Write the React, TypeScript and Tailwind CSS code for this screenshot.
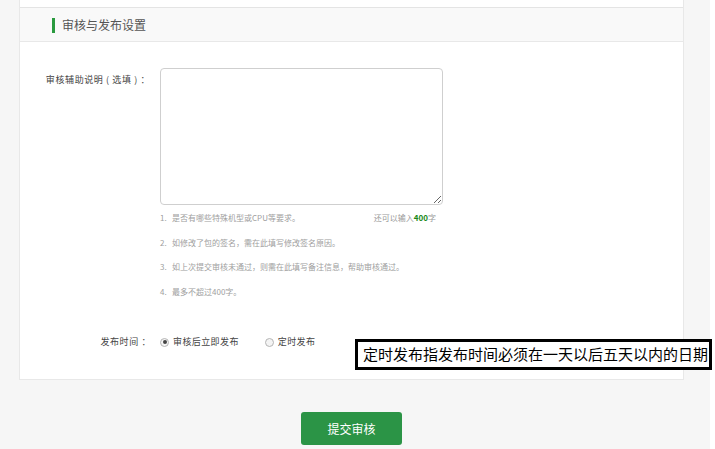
import React from "react";

const cjk = { fontFamily: '"Noto Sans CJK SC", "Noto Sans", sans-serif' };

function Radio({ checked }: { checked?: boolean }) {
  return (
    <span className="w-[9px] h-[9px] rounded-full border border-[#b5b5b5] bg-[#f4f4f4] flex items-center justify-center">
      {checked && <span className="w-[4px] h-[4px] rounded-full bg-[#444]" />}
    </span>
  );
}

export default function App() {
  const hints = [
    "是否有哪些特殊机型或CPU等要求。",
    "如修改了包的签名，需在此填写修改签名原因。",
    "如上次提交审核未通过，则需在此填写备注信息，帮助审核通过。",
    "最多不超过400字。",
  ];

  return (
    <div className="relative w-[715px] h-[449px] bg-[#f6f6f6] flex overflow-hidden" style={cjk}>
      <div className="w-[710px] pl-[19px] pr-[26px] flex flex-col">
        {/* 卡片 */}
        <div className="flex flex-col bg-white border-x border-b border-[#e8e8e8]">
          <div className="h-[8px] border-b border-[#e4e4e4]" />
          <div className="h-[34px] bg-[#f9f9f9] border-b border-[#e8e8e8] flex items-center pl-[32px] pt-[1px]">
            <span className="w-[3px] h-[15px] bg-[#2a9a3f] mr-[7px]" />
            <span className="text-[12px] text-[#555]">审核与发布设置</span>
          </div>

          <div className="flex flex-col pt-[26px] pb-[27px]">
            <div className="flex">
              <div className="w-[140px] shrink-0 pr-[10px] pt-[5px] text-right text-[9px] leading-[14px] tracking-[0.6px] text-[#444] whitespace-pre">
                {"审核辅助说明 ( 选填 ) ："}
              </div>
              <textarea className="w-[283px] h-[137px] shrink-0 border border-[#cfcfcf] rounded-[4px] outline-none" />
            </div>

            <div className="ml-[140px] mt-[1px] w-[283px] flex flex-col">
              {hints.map((h, i) => (
                <div key={i} className="h-[24.5px] flex items-center text-[8px] text-[#a0a0a0]">
                  <span className="w-[12px]">{i + 1}.</span>
                  <span className="flex-1">{h}</span>
                  {i === 0 && (
                    <span className="pr-[7px] text-[#999]">
                      还可以输入<b className="text-[#1a8a1a]">400</b>字
                    </span>
                  )}
                </div>
              ))}
            </div>

            <div className="flex items-center h-[20px] mt-[28px]">
              <div className="w-[140px] pr-[9px] text-right text-[9px] tracking-[0.6px] text-[#444] whitespace-pre">
                {"发布时间 ："}
              </div>
              <label className="flex items-center gap-[4px] text-[9px] tracking-[0.4px] text-[#444]">
                <Radio checked />
                审核后立即发布
              </label>
              <label className="flex items-center gap-[4px] ml-[26px] text-[9px] tracking-[0.4px] text-[#444]">
                <Radio />
                定时发布
              </label>
            </div>
          </div>
        </div>

        <div className="flex justify-center mt-[32px]">
          <button className="w-[101px] h-[33px] rounded-[3px] bg-[#2b9446] text-white text-[12px]">
            提交审核
          </button>
        </div>
      </div>
      <div className="w-[5px] bg-white" />

      {/* 提示框 */}
      <div className="absolute left-[355px] top-[339px] w-[357px] h-[31px] border-[3px] border-black bg-white flex items-center pl-[5px] text-[15px] text-black">
        定时发布指发布时间必须在一天以后五天以内的日期
      </div>
    </div>
  );
}
